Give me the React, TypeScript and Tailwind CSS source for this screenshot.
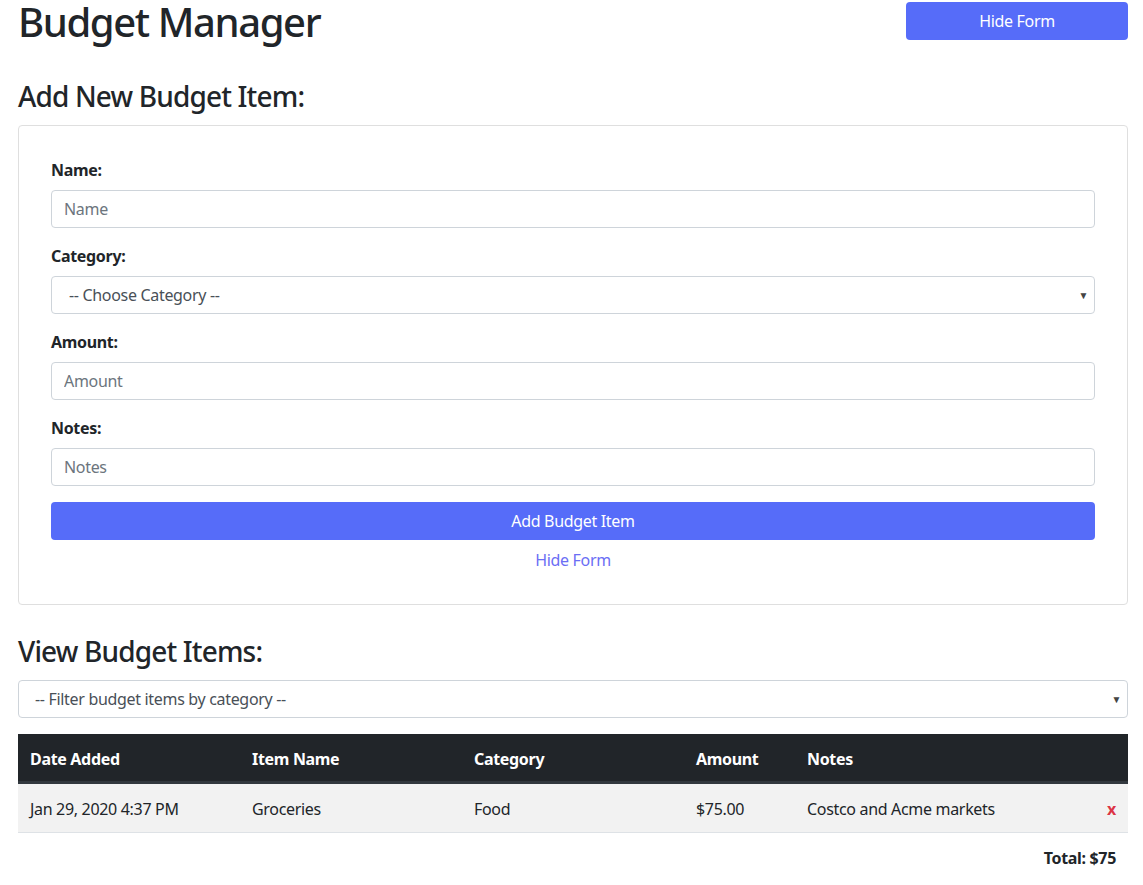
import React from "react";

const font = { fontFamily: '"Noto Sans", "Open Sans", sans-serif' };

function Field({ label, placeholder }: { label: string; placeholder: string }) {
  return (
    <div className="mb-4">
      <label className="block mb-2 font-bold text-[16px] leading-6 text-[#212529]">{label}</label>
      <input
        className="block w-full h-[38px] px-3 rounded border border-[#ced4da] text-[16px] tracking-[-0.02em] text-[#495057] placeholder:text-[#6c757d] outline-none"
        placeholder={placeholder}
      />
    </div>
  );
}

function FakeSelect({ text, indent }: { text: string; indent: string }) {
  return (
    <div className="flex items-center justify-between w-full h-[38px] rounded border border-[#ced4da] bg-white text-[16px] text-[#495057]">
      <span className={indent}>{text}</span>
      <span className="mr-[6px] text-[10px] text-[#444]">▼</span>
    </div>
  );
}

export default function App() {
  return (
    <div className="min-h-screen bg-white text-[#212529] tracking-[-0.02em]" style={font}>
      <div className="mx-[18px] w-[1110px]">
        <div className="flex items-start justify-between">
          <h1 className="text-[40px] leading-[48px] -mt-[2px] font-medium m-0 tracking-[-0.035em]">Budget Manager</h1>
          <button className="mt-[2px] w-[222px] h-[38px] rounded bg-[#566cf9] text-white text-[16px]">Hide Form</button>
        </div>

        <h3 className="mt-[35px] mb-[14px] text-[28px] leading-[30px] font-medium tracking-[-0.03em]">Add New Budget Item:</h3>
        <div className="border border-[#dfdfdf] rounded p-8">
          <Field label="Name:" placeholder="Name" />
          <div className="mb-4">
            <label className="block mb-2 font-bold text-[16px] leading-6">Category:</label>
            <FakeSelect text="-- Choose Category --" indent="ml-[17px]" />
          </div>
          <Field label="Amount:" placeholder="Amount" />
          <Field label="Notes:" placeholder="Notes" />
          <button className="block w-full h-[38px] rounded bg-[#566cf9] text-white text-[16px]">Add Budget Item</button>
          <div className="mt-2 text-center text-[16px] leading-6 text-[#6b6ef5]">Hide Form</div>
        </div>

        <h3 className="mt-[31px] mb-[14px] text-[28px] leading-[30px] font-medium tracking-[-0.03em]">View Budget Items:</h3>
        <FakeSelect text="-- Filter budget items by category --" indent="ml-[16px]" />

        <table className="mt-4 w-full table-fixed border-collapse text-[16px]">
          <colgroup>
            <col className="w-[222px]" />
            <col className="w-[222px]" />
            <col className="w-[222px]" />
            <col className="w-[111px]" />
            <col />
            <col className="w-[40px]" />
          </colgroup>
          <thead>
            <tr className="bg-[#212529] text-white">
              <th className="text-left font-bold px-3 pt-[13px] pb-[10px] leading-6 border-b-[3px] border-[#32383e]">Date Added</th>
              <th className="text-left font-bold px-3 pt-[13px] pb-[10px] leading-6 border-b-[3px] border-[#32383e]">Item Name</th>
              <th className="text-left font-bold px-3 pt-[13px] pb-[10px] leading-6 border-b-[3px] border-[#32383e]">Category</th>
              <th className="text-left font-bold px-3 pt-[13px] pb-[10px] leading-6 border-b-[3px] border-[#32383e]">Amount</th>
              <th className="text-left font-bold px-3 pt-[13px] pb-[10px] leading-6 border-b-[3px] border-[#32383e]">Notes</th>
              <th className="px-3 pt-[13px] pb-[10px] leading-6 border-b-[3px] border-[#32383e]"></th>
            </tr>
          </thead>
          <tbody>
            <tr className="bg-[#f2f2f2] border-b border-[#dee2e6]">
              <td className="px-3 pt-[13px] pb-[11px] leading-6">Jan 29, 2020 4:37 PM</td>
              <td className="px-3 pt-[13px] pb-[11px] leading-6">Groceries</td>
              <td className="px-3 pt-[13px] pb-[11px] leading-6">Food</td>
              <td className="px-3 pt-[13px] pb-[11px] leading-6">$75.00</td>
              <td className="px-3 pt-[13px] pb-[11px] leading-6">Costco and Acme markets</td>
              <td className="px-3 pt-[13px] pb-[11px] leading-6 text-right font-bold text-[#dc3545]">x</td>
            </tr>
          </tbody>
        </table>
        <div className="text-right font-bold text-[16px] leading-6 px-3 pt-[13px] pb-[11px]">Total: $75</div>
      </div>
    </div>
  );
}
